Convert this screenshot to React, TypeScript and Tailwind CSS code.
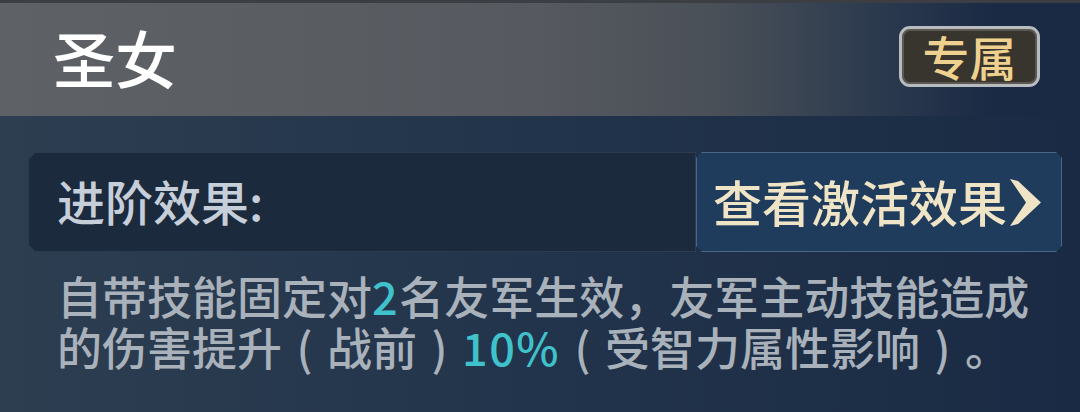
import React from 'react';

const font = { fontFamily: '"Noto Sans CJK SC", "Noto Sans", sans-serif' };

function Chevron() {
  return (
    <svg width="32" height="47" viewBox="0 0 32 47" className="ml-[2px]">
      <polygon points="1,0 9,2 32,23.5 9,45 1,47 17,23.5" fill="#efe4c6" />
    </svg>
  );
}

// half-width paren centred in a full em, like the game's font
function Paren({ c }: { c: string }) {
  return <span className="inline-block w-[1em] text-center">{c}</span>;
}

function Num({ v }: { v: string }) {
  return <span className="inline-block text-[#3fc2cb] tracking-[1.5px]">{v}</span>;
}

export default function App() {
  return (
    <div className="w-[1080px] h-[412px] overflow-hidden bg-gradient-to-r from-[#2d3e51] via-[#22344b] to-[#1a2a44]" style={font}>
      {/* Header */}
      <header className="h-[116px] flex items-center justify-between pl-[53px] pr-[40px] border-t-[3px] border-[#3b3e43] bg-[linear-gradient(to_right,#5e6165_0%,#56595f_50%,#4a5058_66%,#2a394e_82%,#1b2a44_92%)]">
        <h1 className="text-[62px] leading-none font-medium text-white -mt-[6px]">圣女</h1>
        <div className="w-[141px] h-[61px] -mt-[6px] rounded-[11px] border-[3px] border-[#b9bcbf] bg-[#38342e] shadow-[inset_0_0_0_2px_#5b5852] flex items-center justify-center">
          <span className="text-[47px] leading-none font-medium text-[#efd18f] -mt-[2px]">专属</span>
        </div>
      </header>

      {/* Body */}
      <div className="pt-[36px] pl-[28px] pr-[18px]">
        <div className="h-[100px] flex items-stretch">
          <div className="flex-1 flex items-center pl-[28px] bg-[#1c2a3d] border border-[#2c3c50] [clip-path:polygon(8px_0,100%_0,100%_100%,8px_100%,0_calc(100%-8px),0_8px)]">
            <span className="text-[48px] leading-none font-medium text-[#c6cfd9] -mt-[4px]">进阶效果:</span>
          </div>
          <div className="w-[366px] flex items-center pl-[16px] bg-[#1f3c5d] border border-[#48698b] [clip-path:polygon(6px_0,calc(100%-6px)_0,100%_6px,100%_calc(100%-6px),calc(100%-6px)_100%,6px_100%,0_calc(100%-6px),0_6px)]">
            <span className="text-[49px] leading-none font-medium text-[#efe4c6] -mt-[4px]">查看激活效果</span>
            <Chevron />
          </div>
        </div>

        <div className="mt-[18px] pl-[29px] text-[45px] leading-[51px] font-medium text-[#a9b1ba]">
          <div className="h-[51px] whitespace-nowrap">
            自带技能固定对<Num v="2" />名友军生效，友军主动技能造成
          </div>
          <div className="h-[51px] whitespace-nowrap">
            的伤害提升<Paren c="(" />战前<Paren c=")" /><Num v="10%" /><Paren c="(" />受智力属性影响<Paren c=")" />。
          </div>
        </div>
      </div>
    </div>
  );
}
